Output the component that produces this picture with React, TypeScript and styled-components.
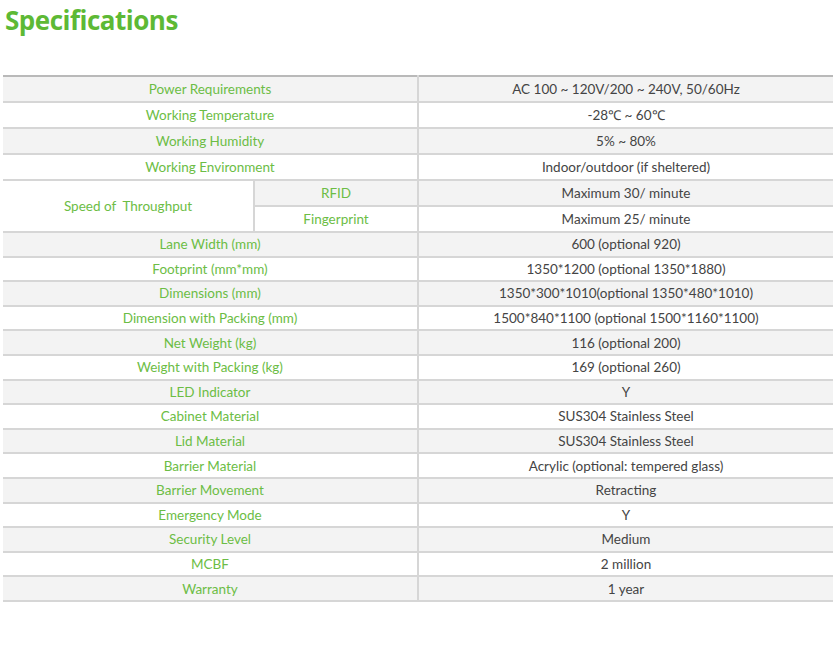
import React from 'react';
import styled, { createGlobalStyle } from 'styled-components';

const Global = createGlobalStyle`
  body { margin: 0; background: #fff; font-family: Lato, "Open Sans", sans-serif; }
`;

const Page = styled.div`
  padding: 0 6px 0 3px;
`;

const Title = styled.h1`
  margin: 0;
  padding: 2px 0 0 2px;
  height: 75px;
  box-sizing: border-box;
  font-family: "Open Sans", sans-serif;
  font-weight: 700;
  font-size: 26px;
  letter-spacing: -0.5px;
  color: #5db935;
`;

const Table = styled.table`
  width: 830px;
  border-collapse: collapse;
  border-top: 2px solid #b9b9b9;
  font-size: 13.5px;
`;

const Row = styled.tr<{ $shade: boolean; $h: number }>`
  background: ${p => (p.$shade ? '#f3f3f3' : '#fff')};
  height: ${p => p.$h}px;
`;

const Label = styled.td`
  color: #6cbd45;
  text-align: center;
  border-bottom: 2px solid #d6d6d6;
  border-right: 2px solid #d6d6d6;
  padding: 0;
`;

const Value = styled.td`
  width: 414px;
  color: #444;
  text-align: center;
  border-bottom: 2px solid #d6d6d6;
  padding: 0;
`;

const White = styled(Label)`
  background: #fff;
  width: 250px;
`;

const top = [
  ['Power Requirements', 'AC 100 ~ 120V/200 ~ 240V, 50/60Hz'],
  ['Working Temperature', '-28℃ ~ 60℃'],
  ['Working Humidity', '5% ~ 80%'],
  ['Working Environment', 'Indoor/outdoor (if sheltered)'],
];

const rest = [
  ['Lane Width (mm)', '600 (optional 920)'],
  ['Footprint (mm*mm)', '1350*1200 (optional 1350*1880)'],
  ['Dimensions (mm)', '1350*300*1010(optional 1350*480*1010)'],
  ['Dimension with Packing (mm)', '1500*840*1100 (optional 1500*1160*1100)'],
  ['Net Weight (kg)', '116 (optional 200)'],
  ['Weight with Packing (kg)', '169 (optional 260)'],
  ['LED Indicator', 'Y'],
  ['Cabinet Material', 'SUS304 Stainless Steel'],
  ['Lid Material', 'SUS304 Stainless Steel'],
  ['Barrier Material', 'Acrylic (optional: tempered glass)'],
  ['Barrier Movement', 'Retracting'],
  ['Emergency Mode', 'Y'],
  ['Security Level', 'Medium'],
  ['MCBF', '2 million'],
  ['Warranty', '1 year'],
];

export default function App() {
  return (
    <>
      <Global />
      <Page>
        <Title>Specifications</Title>
        <Table>
          <tbody>
            {top.map(([k, v], i) => (
              <Row key={k} $shade={i % 2 === 0} $h={26}>
                <Label colSpan={2}>{k}</Label>
                <Value>{v}</Value>
              </Row>
            ))}
            <Row $shade $h={26}>
              <White rowSpan={2}>Speed of&nbsp; Throughput</White>
              <Label>RFID</Label>
              <Value>Maximum 30/ minute</Value>
            </Row>
            <Row $shade={false} $h={26}>
              <Label>Fingerprint</Label>
              <Value>Maximum 25/ minute</Value>
            </Row>
            {rest.map(([k, v], i) => (
              <Row key={k} $shade={i % 2 === 0} $h={24.6}>
                <Label colSpan={2}>{k}</Label>
                <Value>{v}</Value>
              </Row>
            ))}
          </tbody>
        </Table>
      </Page>
    </>
  );
}
